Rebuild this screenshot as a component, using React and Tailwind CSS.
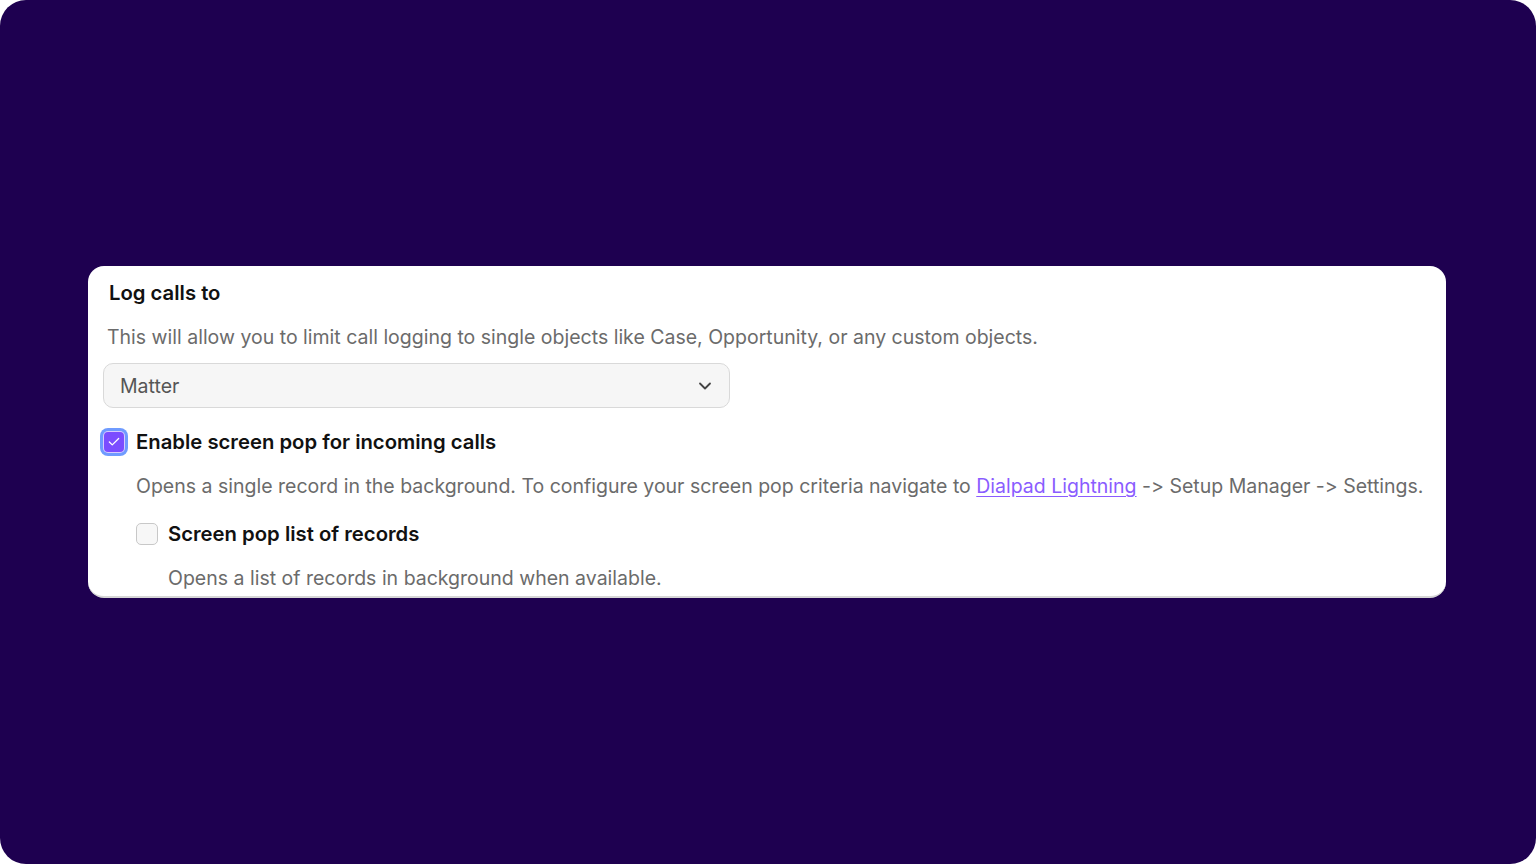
import { ChevronDown, Check } from "lucide-react";

function Checkbox({ checked }) {
    if (checked) {
        return (
            <span className="flex h-[28px] w-[28px] shrink-0 items-center justify-center rounded-[8px] bg-[#6f9bff]">
                <span className="flex h-[22px] w-[22px] items-center justify-center rounded-[5px] border border-white/70 bg-[#7b4dff]">
                    <Check className="h-[14px] w-[14px] text-white" strokeWidth={2.2} />
                </span>
            </span>
        );
    }
    return (
        <span className="h-[22px] w-[22px] shrink-0 rounded-[5px] border border-[#c8c8c8] bg-[#f7f7f7]" />
    );
}

export default function App() {
    return (
        <div className="h-screen w-full bg-white font-['Inter',sans-serif] [font-feature-settings:'calt'_0]">
            <div className="flex h-full items-center justify-center rounded-[26px] bg-[#1e0050] pl-[88px] pr-[90px]">
                <div className="w-full rounded-[16px] border-b-2 border-[#d6d6d6] bg-white pb-[6px] pl-[15px] pr-[16px] pt-[15px]">
                    <h2 className="pl-[6px] text-[20.3px] font-semibold leading-[24px] text-[#111]">
                        Log calls to
                    </h2>
                    <p className="mt-[20px] pl-[4px] text-[19.5px] leading-[24px] text-[#6b6b6b]">
                        This will allow you to limit call logging to single objects like Case, Opportunity, or any custom objects.
                    </p>
                    <div className="mt-[14px] flex h-[45px] w-[627px] items-center justify-between rounded-[10px] border border-[#d9d9d9] bg-[#f6f6f6] pl-[16px] pr-[14px]">
                        <span className="pt-[3px] text-[19.5px] text-[#555]">Matter</span>
                        <ChevronDown className="h-[20px] w-[20px] text-[#444]" strokeWidth={2.2} />
                    </div>
                    <label className="mt-[20px] flex items-center gap-[8px]">
                        <span className="-ml-[3px]">
                            <Checkbox checked />
                        </span>
                        <span className="text-[20.3px] font-semibold leading-[24px] text-[#111]">
                            Enable screen pop for incoming calls
                        </span>
                    </label>
                    <p className="mt-[18px] pl-[33px] text-[19.5px] leading-[24px] text-[#6b6b6b]">
                        Opens a single record in the background. To configure your screen pop criteria navigate to{" "}
                        <a className="text-[#8a5cff] underline underline-offset-[3px]">Dialpad Lightning</a>{" "}
                        -&gt; Setup Manager -&gt; Settings.
                    </p>
                    <label className="mt-[24px] flex items-center gap-[10px] pl-[33px]">
                        <Checkbox />
                        <span className="text-[20.3px] font-semibold leading-[24px] text-[#111]">
                            Screen pop list of records
                        </span>
                    </label>
                    <p className="mt-[20px] pl-[65px] text-[19.5px] leading-[24px] text-[#6b6b6b]">
                        Opens a list of records in background when available.
                    </p>
                </div>
            </div>
        </div>
    );
}
